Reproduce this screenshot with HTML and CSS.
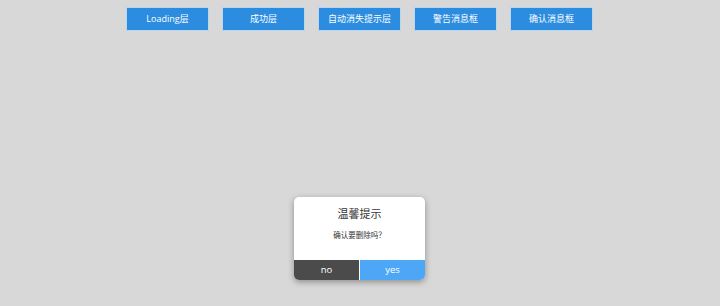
FILE: index.html
```html
<!DOCTYPE html>
<html lang="zh-CN">
<head>
<meta charset="utf-8">
<title>layer demo</title>
<link rel="stylesheet" href="styles.css">
</head>
<body>
<div class="toolbar">
  <button class="btn">Loading层</button>
  <button class="btn">成功层</button>
  <button class="btn">自动消失提示层</button>
  <button class="btn">警告消息框</button>
  <button class="btn">确认消息框</button>
</div>
<div class="dialog">
  <div class="dialog-title">温馨提示</div>
  <div class="dialog-msg">确认要删除吗？</div>
  <div class="dialog-actions">
    <div class="act act-no">no</div>
    <div class="act act-yes">yes</div>
  </div>
</div>
</body>
</html>
```
FILE: styles.css
```css
html, body {
  margin: 0;
  padding: 0;
  height: 100%;
}
body {
  background: #d8d8d8;
  font-family: "Open Sans", "Noto Sans CJK SC", sans-serif;
  color: #333;
}
.toolbar {
  display: flex;
  justify-content: flex-start;
  gap: 13px;
  padding-top: 7px;
  padding-left: 126px;
}
.btn {
  width: 83px;
  height: 24px;
  margin: 0;
  padding: 0;
  border: 1px solid #b9d6ef;
  background: #2c8de0;
  color: #fff;
  font-family: "Open Sans", "Noto Sans CJK SC", sans-serif;
  font-size: 9px;
  line-height: 22px;
}
.dialog {
  position: absolute;
  left: 294px;
  top: 197px;
  width: 131px;
  height: 83px;
  background: #fff;
  border-radius: 5px;
  box-shadow: 0 2px 6px rgba(0, 0, 0, 0.35);
  overflow: hidden;
  display: flex;
  flex-direction: column;
}
.dialog-title {
  text-align: center;
  font-size: 11px;
  line-height: 14px;
  margin-top: 10px;
  color: #333;
}
.dialog-msg {
  text-align: center;
  font-family: "Noto Sans CJK SC", sans-serif;
  font-size: 7.5px;
  line-height: 10px;
  margin-top: 9px;
  color: #333;
}
.dialog-actions {
  margin-top: auto;
  display: flex;
  height: 20px;
}
.act {
  flex: 1;
  text-align: center;
  font-size: 9.5px;
  line-height: 20px;
  color: #fff;
}
.act-no {
  background: #4b4b4b;
  border-right: 1px solid #fff;
}
.act-yes {
  background: #4ea6f6;
}
```
